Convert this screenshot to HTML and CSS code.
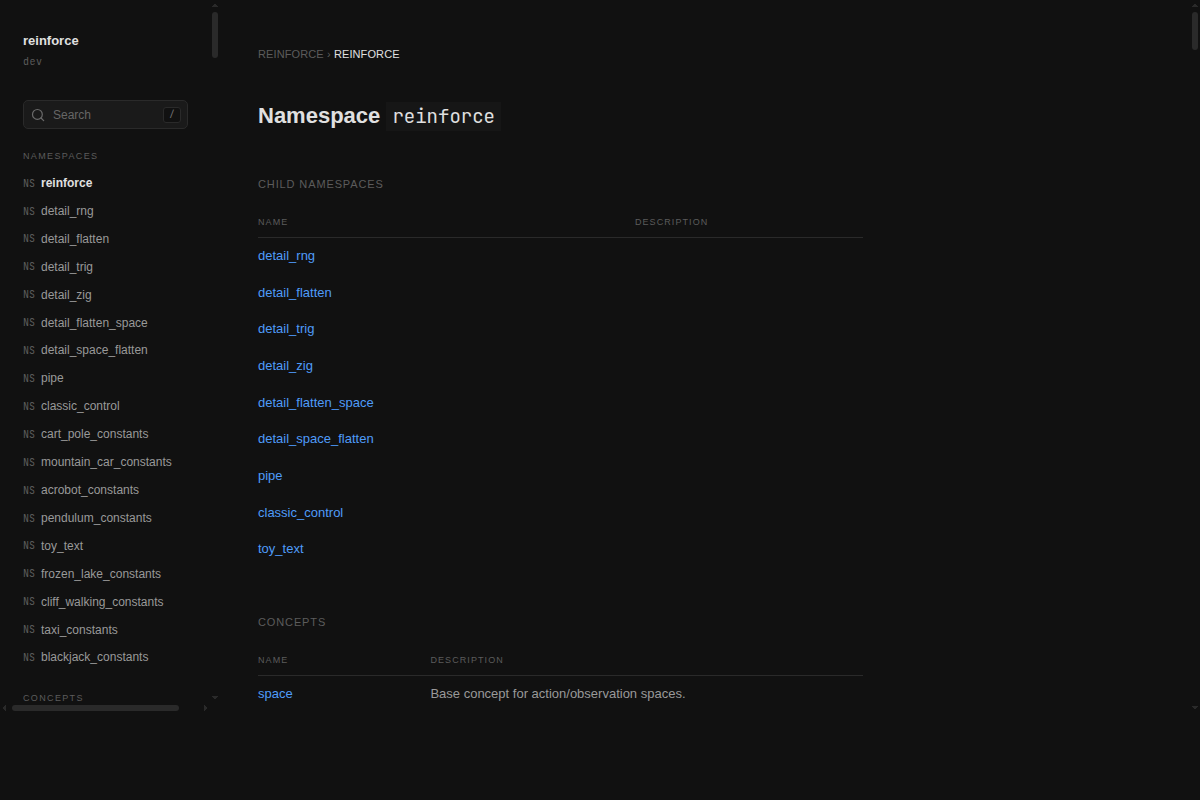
FILE: index.html
```html
<!DOCTYPE html>
<html lang="en">
<head>
<meta charset="utf-8">
<meta name="viewport" content="width=device-width, initial-scale=1">
<title>reinforce</title>
<link rel="stylesheet" href="styles.css">
</head>
<body>
<div class="shell">
  <aside class="sidebar">
    <div class="sidebar-content">
      <div class="brand">
        <div class="brand-name">reinforce</div>
        <div class="brand-version">dev</div>
      </div>
      <label class="search">
        <svg class="search-icon" viewBox="0 0 14 14" aria-hidden="true"><circle cx="6.4" cy="6.4" r="4.9"/><path d="M10 10l2.7 2.7"/></svg>
        <input class="search-input" type="text" placeholder="Search" aria-label="Search">
        <kbd class="search-key">/</kbd>
      </label>
      <nav aria-label="Sidebar">
        <h2 class="nav-title">Namespaces</h2>
        <ul class="nav-list">
          <li><a class="nav-link active" href="#"><span class="tag">NS</span>reinforce</a></li>
          <li><a class="nav-link" href="#"><span class="tag">NS</span>detail_rng</a></li>
          <li><a class="nav-link" href="#"><span class="tag">NS</span>detail_flatten</a></li>
          <li><a class="nav-link" href="#"><span class="tag">NS</span>detail_trig</a></li>
          <li><a class="nav-link" href="#"><span class="tag">NS</span>detail_zig</a></li>
          <li><a class="nav-link" href="#"><span class="tag">NS</span>detail_flatten_space</a></li>
          <li><a class="nav-link" href="#"><span class="tag">NS</span>detail_space_flatten</a></li>
          <li><a class="nav-link" href="#"><span class="tag">NS</span>pipe</a></li>
          <li><a class="nav-link" href="#"><span class="tag">NS</span>classic_control</a></li>
          <li><a class="nav-link" href="#"><span class="tag">NS</span>cart_pole_constants</a></li>
          <li><a class="nav-link" href="#"><span class="tag">NS</span>mountain_car_constants</a></li>
          <li><a class="nav-link" href="#"><span class="tag">NS</span>acrobot_constants</a></li>
          <li><a class="nav-link" href="#"><span class="tag">NS</span>pendulum_constants</a></li>
          <li><a class="nav-link" href="#"><span class="tag">NS</span>toy_text</a></li>
          <li><a class="nav-link" href="#"><span class="tag">NS</span>frozen_lake_constants</a></li>
          <li><a class="nav-link" href="#"><span class="tag">NS</span>cliff_walking_constants</a></li>
          <li><a class="nav-link" href="#"><span class="tag">NS</span>taxi_constants</a></li>
          <li><a class="nav-link" href="#"><span class="tag">NS</span>blackjack_constants</a></li>
        </ul>
        <h2 class="nav-title">Concepts</h2>
      </nav>
    </div>
    <div class="bar bar-y" aria-hidden="true">
      <svg class="arrow-y" viewBox="0 0 6 3"><path d="M2 0h2v1h1v1h1v1H0V2h1V1h1z"/></svg>
      <div class="track"><div class="thumb thumb-side"></div></div>
      <svg class="arrow-y" viewBox="0 0 6 3"><path d="M0 0h6v1H5v1H4v1H2V2H1V1H0z"/></svg>
    </div>
    <div class="bar bar-x" aria-hidden="true">
      <svg class="arrow-x" viewBox="0 0 3 6"><path d="M3 0v6H2V5H1V4H0V2h1V1h1V0z"/></svg>
      <div class="track"><div class="thumb thumb-wide"></div></div>
      <svg class="arrow-x" viewBox="0 0 3 6"><path d="M0 0h1v1h1v1h1v2H2v1H1v1H0z"/></svg>
    </div>
  </aside>
  <main class="main">
    <div class="content">
      <nav class="crumbs" aria-label="Breadcrumb"><a class="crumb" href="#">reinforce</a> › <span class="crumb-current">reinforce</span></nav>
      <h1 class="title">Namespace <code class="title-code">reinforce</code></h1>
      <section class="section">
        <h2 class="section-title">Child Namespaces</h2>
        <table class="table table-children">
          <thead><tr><th>Name</th><th>Description</th></tr></thead>
          <tbody>
            <tr><td><a class="link" href="#">detail_rng</a></td><td></td></tr>
            <tr><td><a class="link" href="#">detail_flatten</a></td><td></td></tr>
            <tr><td><a class="link" href="#">detail_trig</a></td><td></td></tr>
            <tr><td><a class="link" href="#">detail_zig</a></td><td></td></tr>
            <tr><td><a class="link" href="#">detail_flatten_space</a></td><td></td></tr>
            <tr><td><a class="link" href="#">detail_space_flatten</a></td><td></td></tr>
            <tr><td><a class="link" href="#">pipe</a></td><td></td></tr>
            <tr><td><a class="link" href="#">classic_control</a></td><td></td></tr>
            <tr><td><a class="link" href="#">toy_text</a></td><td></td></tr>
          </tbody>
        </table>
      </section>
      <section class="section">
        <h2 class="section-title">Concepts</h2>
        <table class="table table-concepts">
          <thead><tr><th>Name</th><th>Description</th></tr></thead>
          <tbody>
            <tr><td><a class="link" href="#">space</a></td><td>Base concept for action/observation spaces.</td></tr>
          </tbody>
        </table>
      </section>
    </div>
    <div class="bar bar-y" aria-hidden="true">
      <svg class="arrow-y" viewBox="0 0 6 3"><path d="M2 0h2v1h1v1h1v1H0V2h1V1h1z"/></svg>
      <div class="track"><div class="thumb thumb-main"></div></div>
      <svg class="arrow-y" viewBox="0 0 6 3"><path d="M0 0h6v1H5v1H4v1H2V2H1V1H0z"/></svg>
    </div>
  </main>
</div>
</body>
</html>
```
FILE: styles.css
```css
:root {
  --bg: #111111;
  --text: #e0e0e0;
  --soft: #999999;
  --muted: #5c5c5c;
  --line: #2a2a2a;
  --link: #4f9cf9;
  --sans: "Liberation Sans", Arial, sans-serif;
  --mono: "JetBrains Mono", "DejaVu Sans Mono", monospace;
}

* { box-sizing: border-box; }

body {
  margin: 0;
  background: var(--bg);
  color: var(--text);
  font-family: var(--sans);
  font-size: 13px;
  line-height: 1.6;
}

a { color: inherit; text-decoration: none; }
h1, h2, ul { margin: 0; padding: 0; }

.shell {
  display: grid;
  grid-template-columns: 220px 1fr;
  height: 89vh;
  overflow: hidden;
}

.sidebar {
  display: grid;
  grid-template: minmax(0, 1fr) 8px / minmax(0, 1fr) 10px;
  min-height: 0;
}

.sidebar-content {
  overflow: hidden;
  padding: 31px 22px 0 23px;
}

.brand { margin-bottom: 28px; }
.brand-name { font-weight: bold; line-height: 20px; }
.brand-version {
  color: var(--muted);
  font-family: var(--mono);
  font-size: 10px;
  line-height: 21px;
  letter-spacing: 0.05em;
}

.search {
  display: flex;
  align-items: center;
  gap: 8px;
  height: 29px;
  margin-bottom: 21px;
  padding: 0 6px 0 7px;
  background: #1a1a1a;
  border: 1px solid var(--line);
  border-radius: 5px;
}
.search-icon { flex: none; width: 14px; height: 14px; fill: none; stroke: #6b6b6b; stroke-width: 1.2; stroke-linecap: round; }
.search-input {
  flex: 1;
  min-width: 0;
  padding: 0;
  border: 0;
  outline: 0;
  background: none;
  color: var(--text);
  font: 12px var(--sans);
}
.search-input::placeholder { color: #666666; opacity: 1; }
.search-key {
  width: 18px;
  height: 16px;
  background: var(--bg);
  border: 1px solid var(--line);
  border-radius: 3px;
  color: #777777;
  font: 9px/13px var(--mono);
  text-align: center;
}

.nav-title {
  margin-bottom: 8px;
  color: var(--muted);
  font-size: 9px;
  font-weight: normal;
  line-height: 12px;
  letter-spacing: 0.15em;
  text-transform: uppercase;
}
.nav-list { list-style: none; margin-bottom: 20px; }
.nav-link {
  display: flex;
  align-items: center;
  gap: 6px;
  padding: 4px 0;
  color: var(--soft);
  font-size: 12px;
  line-height: 1.66;
  white-space: nowrap;
}
.nav-link.active { color: var(--text); font-weight: bold; }
.tag {
  width: 12px;
  color: var(--muted);
  font-family: var(--mono);
  font-size: 10px;
  font-weight: normal;
}

.bar { display: flex; align-items: center; }
.bar svg { flex: none; fill: var(--line); }
.bar-y { flex-direction: column; width: 10px; padding: 4px 0 3px; }
.sidebar .bar-y { padding-bottom: 5px; }
.bar-x { height: 8px; padding: 0 3px; }
.arrow-y { width: 6px; height: 3px; }
.arrow-x { width: 3px; height: 6px; }
.track { flex: 1; min-height: 0; }
.bar-y .track { margin: 5px 0; }
.bar-x .track { margin: 0 6px; }
.thumb { background: var(--line); border-radius: 3px; }
.thumb-side { width: 6px; height: 46px; }
.thumb-main { width: 6px; height: 38px; }
.thumb-wide { width: 90%; height: 6px; }

.main {
  display: grid;
  grid-template-columns: minmax(0, 1fr) 10px;
  min-height: 0;
}
.content {
  overflow: hidden;
  padding: 45px 327px 0 38px;
}

.crumbs {
  margin-bottom: 36px;
  color: var(--muted);
  font-size: 11px;
  line-height: 18px;
  letter-spacing: 0.01em;
  text-transform: uppercase;
}
.crumb-current { color: var(--text); }

.title { margin-bottom: 41px; font-size: 22px; line-height: 34px; }
.title-code {
  padding: 2px 6px;
  background: #161616;
  font-family: var(--mono);
  font-size: 19px;
  font-weight: normal;
}

.section { margin-bottom: 45px; }
.section-title {
  margin-bottom: 21px;
  color: var(--muted);
  font-size: 11px;
  font-weight: normal;
  line-height: 18px;
  letter-spacing: 0.08em;
  text-transform: uppercase;
}

.table { width: 100%; border-collapse: collapse; table-layout: fixed; }
.table th {
  padding: 0 0 7px;
  border-bottom: 1px solid var(--line);
  color: var(--muted);
  font-size: 9px;
  font-weight: normal;
  line-height: 16px;
  letter-spacing: 0.12em;
  text-align: left;
  text-transform: uppercase;
}
.table td { padding: 8px 0; color: var(--soft); line-height: 1.59; }
.table-children th:first-child { width: 62.3%; }
.table-concepts th:first-child { width: 28.5%; }
.link { color: var(--link); }
```
